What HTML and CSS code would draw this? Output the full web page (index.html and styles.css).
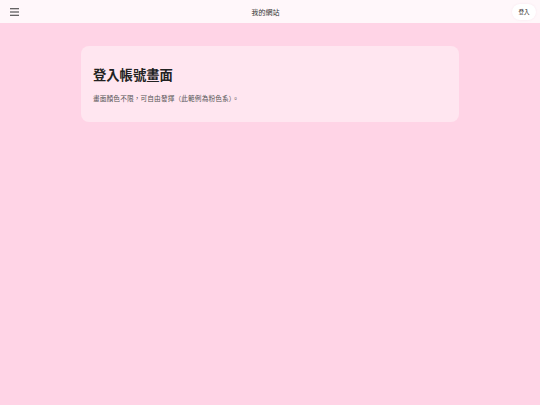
FILE: index.html
```html
<!DOCTYPE html>
<html lang="zh-Hant">
<head>
<meta charset="utf-8">
<title>我的網站</title>
<link rel="stylesheet" href="styles.css">
</head>
<body>
<header class="topbar">
  <button class="menu" aria-label="menu">
    <svg width="9" height="8" viewBox="0 0 9 8"><path d="M0 0.75H9M0 4H9M0 7.25H9" stroke="#333" stroke-width="1.1"/></svg>
  </button>
  <div class="site-title">我的網站</div>
  <button class="login">登入</button>
</header>
<main class="main">
  <section class="card">
    <h1 class="card-title">登入帳號畫面</h1>
    <p class="card-text">畫面顏色不限，可自由發揮（此範例為粉色系）。</p>
  </section>
</main>
</body>
</html>
```
FILE: styles.css
```css
* { box-sizing: border-box; }
html, body { margin: 0; padding: 0; }
body {
  background: #ffd4e6;
  font-family: "Noto Sans CJK TC", "Noto Sans", sans-serif;
  color: #333;
  min-height: 405px;
}
.topbar {
  height: 23px;
  background: #fff7fa;
  display: flex;
  align-items: center;
  padding: 0 4px 0 10px;
}
.menu {
  border: 0;
  background: none;
  padding: 0;
  width: 9px;
  height: 8px;
  display: flex;
  flex: none;
}
.site-title {
  flex: 1;
  text-align: center;
  font-size: 7px;
  color: #333;
}
.login {
  flex: none;
  border: 0;
  background: #fff;
  border-radius: 8px;
  height: 16px;
  width: 24px;
  font-family: inherit;
  font-size: 5.5px;
  color: #222;
  padding: 0;
  box-shadow: 0 0 2px rgba(200, 120, 160, 0.15);
}
.main {
  padding: 23px 81px 0;
}
.card {
  background: #ffe6f0;
  border-radius: 8px;
  height: 76px;
  padding: 20px 12px 0;
}
.card-title {
  margin: 0;
  font-size: 13.3px;
  font-weight: 700;
  line-height: 18px;
  color: #222;
}
.card-text {
  margin: 10px 0 0;
  font-size: 6.65px;
  line-height: 9px;
  color: #555;
  letter-spacing: 0.15px;
}
```
